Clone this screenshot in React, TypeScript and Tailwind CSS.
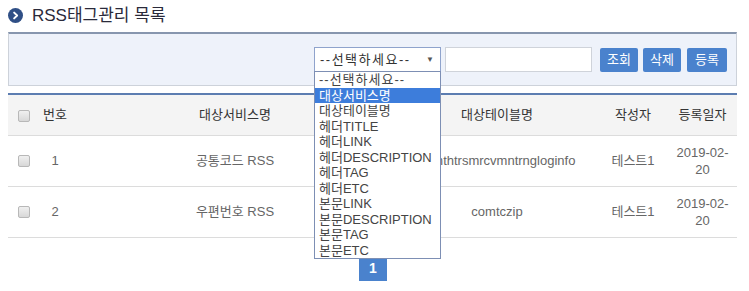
import React from "react";

const font = { fontFamily: '"Liberation Sans", "Noto Sans CJK KR", sans-serif' };

function Check() {
  return (
    <span className="inline-block w-[12px] h-[12px] border border-[#b8b8b8] rounded-[2px] bg-gradient-to-b from-[#f0f0f0] to-[#d8d8d8] align-middle" />
  );
}

const options = [
  "--선택하세요--",
  "대상서비스명",
  "대상테이블명",
  "헤더TITLE",
  "헤더LINK",
  "헤더DESCRIPTION",
  "헤더TAG",
  "헤더ETC",
  "본문LINK",
  "본문DESCRIPTION",
  "본문TAG",
  "본문ETC",
];

const rows = [
  { no: "1", svc: "공통코드 RSS", tbl: "comthtrsmrcvmntrngloginfo", user: "테스트1", date: "2019-02-20" },
  { no: "2", svc: "우편번호 RSS", tbl: "comtczip", user: "테스트1", date: "2019-02-20" },
];

export default function App() {
  return (
    <div className="w-[749px] h-[291px] bg-white overflow-hidden text-[#333]" style={font}>
      <div className="pl-[8px] pr-[12px]">
        {/* title */}
        <div className="h-[32px] flex items-start pt-[7px]">
          <span className="w-[15px] h-[15px] rounded-full bg-[#2f4f86] flex items-center justify-center mt-[1px]">
            <svg width="9" height="9" viewBox="0 0 10 10">
              <path d="M3.5 1.8 L6.8 5 L3.5 8.2" stroke="white" strokeWidth="2.2" fill="none" strokeLinecap="round" strokeLinejoin="round" />
            </svg>
          </span>
          <span className="ml-[9px] text-[17px] leading-[17px] text-[#2a2a3a]">RSS태그관리 목록</span>
        </div>

        {/* search box */}
        <div className="h-[54px] border-t-[2px] border-t-[#8796ae] border-x border-b border-x-[#cdd2da] border-b-[#cdd2da] bg-[#eef2fa] flex items-center justify-end pr-[9px]">
          <div className="relative">
            <div className="w-[127px] h-[25px] border border-[#8fa3cc] bg-white flex items-center justify-between pl-[5px] pr-[6px] text-[13px] text-[#333]">
              <span className="tracking-[1.5px]">--선택하세요--</span>
              <span className="text-[8px] text-[#555]">▼</span>
            </div>
            <div className="absolute left-0 top-[24px] w-[127px] border border-[#7d8fb4] bg-white z-10 text-[13px] text-[#444]">
              {options.map((o, i) => (
                <div
                  key={o}
                  className={
                    "h-[15.5px] leading-[15.5px] pl-[4px] whitespace-nowrap " +
                    (i === 0 ? "tracking-[1px] " : "") +
                    (i === 1 ? "bg-[#3d7ddb] text-white" : "")
                  }
                >
                  {o}
                </div>
              ))}
            </div>
          </div>
          <div className="ml-[4px] w-[147px] h-[25px] border border-[#cfd3da] bg-white" />
          <button className="ml-[8px] w-[38px] h-[24px] rounded-[2px] bg-[#4a82cd] text-white text-[13px]">조회</button>
          <button className="ml-[5px] w-[38px] h-[24px] rounded-[2px] bg-[#4a82cd] text-white text-[13px]">삭제</button>
          <button className="ml-[6px] w-[40px] h-[24px] rounded-[2px] bg-[#4a82cd] text-white text-[13px]">등록</button>
        </div>

        {/* table */}
        <table className="mt-[7px] w-[729px] table-fixed border-collapse border-t-[2px] border-t-[#5c7db1] text-[13px]">
          <colgroup>
            <col className="w-[28px]" />
            <col className="w-[38px]" />
            <col className="w-[322px]" />
            <col className="w-[202px]" />
            <col className="w-[70px]" />
            <col className="w-[69px]" />
          </colgroup>
          <thead>
            <tr className="h-[41px] bg-[#f4f4f4] border-b border-[#dcdcdc] text-[#333]">
              <th className="font-normal text-center pl-[3px]"><Check /></th>
              <th className="font-normal text-center">번호</th>
              <th className="font-normal text-center">대상서비스명</th>
              <th className="font-normal text-center">대상테이블명</th>
              <th className="font-normal text-center">작성자</th>
              <th className="font-normal text-center">등록일자</th>
            </tr>
          </thead>
          <tbody className="text-[#666]">
            {rows.map((r) => (
              <tr key={r.no} className="h-[51px] border-b border-[#dcdcdc]">
                <td className="text-center pl-[3px]"><Check /></td>
                <td className="text-center">{r.no}</td>
                <td className="text-center">{r.svc}</td>
                <td className="text-center">{r.tbl}</td>
                <td className="text-center">{r.user}</td>
                <td className="text-center px-[5px] leading-[17px] break-words">{r.date}</td>
              </tr>
            ))}
          </tbody>
        </table>

        {/* pagination */}
        <div className="flex justify-center mt-[19px] pl-[1px]">
          <span className="w-[28px] h-[24px] bg-[#4a82cd] text-white text-[14px] font-bold flex items-center justify-center">1</span>
        </div>
      </div>
    </div>
  );
}
